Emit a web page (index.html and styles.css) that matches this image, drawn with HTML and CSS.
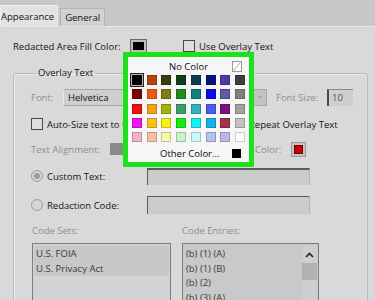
FILE: index.html
```html
<html>
  <head>
    <link rel="stylesheet" href="styles.css">
  </head>
  <body>
    <div class="tabs">
      <div class="tab active">Appearance</div>
      <div class="tab">General</div>
    </div>

    <div class="pane">
      <div class="fill-row">
        <span class="fill-label">Redacted Area Fill Color:</span>
        <span class="fill-btn"><span class="fill-chip"></span></span>
        <span class="check"></span>
        <span>Use Overlay Text</span>
      </div>

      <fieldset class="group">
        <legend>Overlay Text</legend>

        <div class="row row-font">
          <span class="dim font-label">Font:</span>
          <div class="select">
            <span>Helvetica</span>
            <span class="arrow">&#8964;</span>
          </div>
          <span class="dim size-label">Font Size:</span>
          <div class="size-box">10</div>
        </div>

        <div class="row row-auto">
          <div class="auto-cell">
            <span class="check"></span>
            <span>Auto-Size text to fit</span>
          </div>
          <span class="check"></span>
          <span>Repeat Overlay Text</span>
        </div>

        <div class="row row-align">
          <span class="dim align-label">Text Alignment:</span>
          <div class="align-btns"></div>
          <span class="dim color-label">Color:</span>
          <span class="color-btn"><span class="color-chip"></span></span>
        </div>

        <div class="row row-custom">
          <span class="radio on"></span>
          <span class="radio-label">Custom Text:</span>
          <div class="text-box"></div>
        </div>

        <div class="row row-code">
          <span class="radio"></span>
          <span class="radio-label">Redaction Code:</span>
          <div class="text-box"></div>
        </div>

        <div class="row row-heads">
          <span class="dim sets-head">Code Sets:</span>
          <span class="dim">Code Entries:</span>
        </div>

        <div class="lists">
          <div class="list sets">
            <div class="item">U.S. FOIA</div>
            <div class="item">U.S. Privacy Act</div>
          </div>
          <div class="list entries">
            <div class="entry-items">
              <div class="item">(b) (1) (A)</div>
              <div class="item">(b) (1) (B)</div>
              <div class="item">(b) (2)</div>
              <div class="item">(b) (3) (A)</div>
            </div>
            <div class="scroll">
              <svg class="up" width="9" height="6" viewBox="0 0 9 6">
                <polyline points="1,5 4.5,1.5 8,5" fill="none" stroke="#222" stroke-width="1.6"/>
              </svg>
              <span class="thumb"></span>
            </div>
          </div>
        </div>
      </fieldset>

      <div class="palette">
        <div class="pal-head">
          <span class="pal-title">No Color</span>
          <svg class="no-color" width="10" height="11" viewBox="0 0 10 11">
            <rect x="0.5" y="0.5" width="9" height="10" fill="#fff" stroke="#9a9a9a"/>
            <line x1="1.5" y1="9.5" x2="8.5" y2="1.5" stroke="#d98a8a" stroke-width="1"/>
          </svg>
        </div>
        <div class="swatches">
          <span class="sw picked"><span style="background:#000"></span></span>
          <span class="sw" style="background:#b4440f"></span>
          <span class="sw" style="background:#3c3a12"></span>
          <span class="sw" style="background:#143a18"></span>
          <span class="sw" style="background:#123a50"></span>
          <span class="sw" style="background:#0c1282"></span>
          <span class="sw" style="background:#4a3ca8"></span>
          <span class="sw" style="background:#404040"></span>

          <span class="sw" style="background:#780606"></span>
          <span class="sw" style="background:#ee5a16"></span>
          <span class="sw" style="background:#7e7c12"></span>
          <span class="sw" style="background:#1e8c1e"></span>
          <span class="sw" style="background:#148080"></span>
          <span class="sw" style="background:#0a0af2"></span>
          <span class="sw" style="background:#5c5ca2"></span>
          <span class="sw" style="background:#808080"></span>

          <span class="sw" style="background:#ee1212"></span>
          <span class="sw" style="background:#f2a212"></span>
          <span class="sw" style="background:#a6b014"></span>
          <span class="sw" style="background:#3c9c6a"></span>
          <span class="sw" style="background:#34b0c0"></span>
          <span class="sw" style="background:#4c5cf0"></span>
          <span class="sw" style="background:#7c1282"></span>
          <span class="sw" style="background:#a2a2a2"></span>

          <span class="sw" style="background:#f012f0"></span>
          <span class="sw" style="background:#f4c212"></span>
          <span class="sw" style="background:#f4f012"></span>
          <span class="sw" style="background:#14ee14"></span>
          <span class="sw" style="background:#14f0f0"></span>
          <span class="sw" style="background:#14b0f0"></span>
          <span class="sw" style="background:#a23452"></span>
          <span class="sw" style="background:#c2c2c2"></span>

          <span class="sw" style="background:#f4b2c2"></span>
          <span class="sw" style="background:#f4c2a4"></span>
          <span class="sw" style="background:#f8f8aa"></span>
          <span class="sw" style="background:#caf2ca"></span>
          <span class="sw" style="background:#caf8f8"></span>
          <span class="sw" style="background:#b2c2f2"></span>
          <span class="sw" style="background:#c2b2ea"></span>
          <span class="sw" style="background:#ffffff"></span>
        </div>
        <div class="pal-foot">
          <span class="pal-other">Other Color...</span>
          <span class="other-chip"></span>
        </div>
      </div>
    </div>
  </body>
</html>
```

FILE: styles.css
```css
body
{
    margin: 0;
    height: 300px;
    overflow: hidden;
    background-color: #d9d9d9;
    font-family: "Open Sans", "Noto Sans", sans-serif;
    font-size: 9.5px;
    color: #141414;
}

/* tab strip */
.tabs
{
    display: flex;
    align-items: flex-end;
    height: 26px;
    background-color: #c8c8c8;
    border-bottom: 1px solid #e6e6e6;
}

.tab
{
    height: 17px;
    line-height: 17px;
    padding: 0 4px;
    margin-left: 2px;
    background-color: #d2d2d2;
    border: 1px solid #b4b4b4;
    border-bottom: none;
}

.tab.active
{
    height: 20px;
    line-height: 22px;
    margin-left: 0;
    padding: 0 3px 0 0;
    background-color: #e2e2e2;
    border-color: #f0f0f0;
}

/* main pane */
.pane
{
    position: relative;
    padding: 12px 0 0 13px;
}

.fill-row
{
    display: flex;
    align-items: center;
    height: 14px;
}

.fill-label { width: 117px; }

.fill-btn
{
    width: 15px;
    height: 12px;
    border: 1px solid #6a6a6a;
    background-color: #bdbdbd;
    display: flex;
    align-items: center;
    justify-content: center;
    margin-right: 36px;
}

.fill-chip
{
    width: 11px;
    height: 8px;
    background-color: #000;
}

.check
{
    width: 10px;
    height: 10px;
    border: 1px solid #4a4a4a;
    background-color: #dedede;
    margin-right: 4px;
    flex: none;
}

/* group box */
.group
{
    width: 336px;
    margin: 14px 0 0 0;
    padding: 9px 0 0 17px;
    border: 1px solid #b9b9b9;
    border-radius: 3px;
    box-shadow: inset 1px 1px 0 #ececec;
}

.group legend
{
    padding: 0 2px;
    margin-left: 5px;
    line-height: 12px;
}

.dim { color: #8e8e8e; }

.row
{
    display: flex;
    align-items: center;
    height: 18px;
}

.row-auto { margin-top: 9px; }
.row-align { margin-top: 7px; }
.row-custom { margin-top: 9px; }
.row-code { margin-top: 11px; }
.row-heads { margin-top: 10px; height: 12px; }

.font-label { width: 32px; }

.select
{
    width: 204px;
    height: 17px;
    display: flex;
    align-items: center;
    justify-content: space-between;
    border: 1px solid #a8a8a8;
    border-left-color: #e8e8e8;
    background-color: #cfcfcf;
    padding-left: 4px;
    box-sizing: border-box;
    margin-right: 9px;
}

.arrow
{
    width: 13px;
    height: 15px;
    line-height: 9px;
    text-align: center;
    background-color: #c2c2c2;
    color: #9a9a9a;
}

.size-label { width: 51px; }

.size-box
{
    width: 21px;
    height: 16px;
    line-height: 16px;
    padding-left: 3px;
    background-color: #cfcfcf;
    border-left: 2px solid #4a4a4a;
    border-top: 1px solid #8a8a8a;
    color: #555;
}

.auto-cell
{
    display: flex;
    align-items: center;
    width: 202px;
}

.align-label { width: 79px; }

.align-btns
{
    width: 130px;
    height: 12px;
    background-color: #8a8a8a;
    margin-right: 15px;
}

.color-label { width: 36px; }

.color-btn
{
    width: 13px;
    height: 13px;
    border: 1px solid #9a9a9a;
    background-color: #c4c4c4;
    display: flex;
    align-items: center;
    justify-content: center;
}

.color-chip
{
    width: 9px;
    height: 9px;
    background-color: #cc0000;
    border: 1px solid #6a0000;
    box-sizing: border-box;
}

.radio
{
    width: 10px;
    height: 10px;
    border-radius: 50%;
    border: 1px solid #9a9a9a;
    background-color: #d6d6d6;
    margin-right: 4px;
    display: flex;
    align-items: center;
    justify-content: center;
}

.radio.on::after
{
    content: "";
    width: 6px;
    height: 6px;
    border-radius: 50%;
    background-color: #9c9c9c;
}

.radio-label { width: 100px; }

.text-box
{
    width: 163px;
    height: 17px;
    background-color: #cbcbcb;
    border-top: 2px solid #5a5a5a;
    border-left: 1px solid #5a5a5a;
    border-right: 1px solid #b4b4b4;
    box-sizing: border-box;
}

.row-code .text-box { border-top-width: 1px; height: 18px; }

.sets-head { width: 150px; padding-left: 1px; }

/* lists */
.lists
{
    display: flex;
    gap: 11px;
    margin-top: 7px;
    padding-left: 1px;
}

.list
{
    height: 62px;
    border: 1px solid #7c7c7c;
    background-color: #d3d3d3;
    box-sizing: border-box;
    color: #3a3a3a;
}

.sets
{
    width: 139px;
    padding: 2px 1px;
}

.sets .item
{
    background-color: #c8c8c8;
    height: 15px;
    line-height: 15px;
    padding-left: 2px;
}

.entries
{
    width: 137px;
    display: flex;
    background-color: #c9c9c9;
    padding: 2px 1px 0 1px;
    overflow: hidden;
}

.entry-items { flex: 1; }

.entries .item
{
    height: 14.7px;
    line-height: 15px;
    padding-left: 2px;
}

.scroll
{
    width: 15px;
    display: flex;
    flex-direction: column;
    align-items: center;
    background-color: #cfcfcf;
}

.up { margin: 6px 0 5px 0; }

.thumb
{
    width: 15px;
    height: 17px;
    background-color: #b2b2b2;
}

/* colour picker popup */
.palette
{
    position: absolute;
    left: 123px;
    top: 25px;
    width: 121px;
    height: 105px;
    border: 5px solid #1fe01f;
    background-color: #f6f6f6;
    color: #0a0a0a;
}

.pal-head
{
    display: flex;
    align-items: center;
    height: 16px;
    margin-top: 1px;
}

.pal-title { margin-left: 41px; }

.no-color { margin: 0 7px 0 auto; }

.swatches
{
    display: grid;
    grid-template-columns: repeat(8, 10px);
    grid-auto-rows: 10px;
    justify-content: space-between;
    row-gap: 4.25px;
    width: 113px;
    margin: 1px 0 0 4px;
}

.sw
{
    width: 10px;
    height: 10px;
    box-sizing: border-box;
    border: 1px solid rgba(0, 0, 0, 0.2);
}

.sw.picked
{
    width: 14px;
    height: 14px;
    margin: -2px 0 0 -2px;
    border: 1px solid #222;
    background-color: #b8b8b8;
    display: flex;
    align-items: center;
    justify-content: center;
}

.sw.picked span
{
    width: 10px;
    height: 10px;
}

.pal-foot
{
    display: flex;
    align-items: center;
    height: 12px;
    margin-top: 5px;
}

.pal-other { margin-left: 32px; }

.other-chip
{
    width: 9px;
    height: 9px;
    margin: 0 8px 0 auto;
    background-color: #000;
}
```
